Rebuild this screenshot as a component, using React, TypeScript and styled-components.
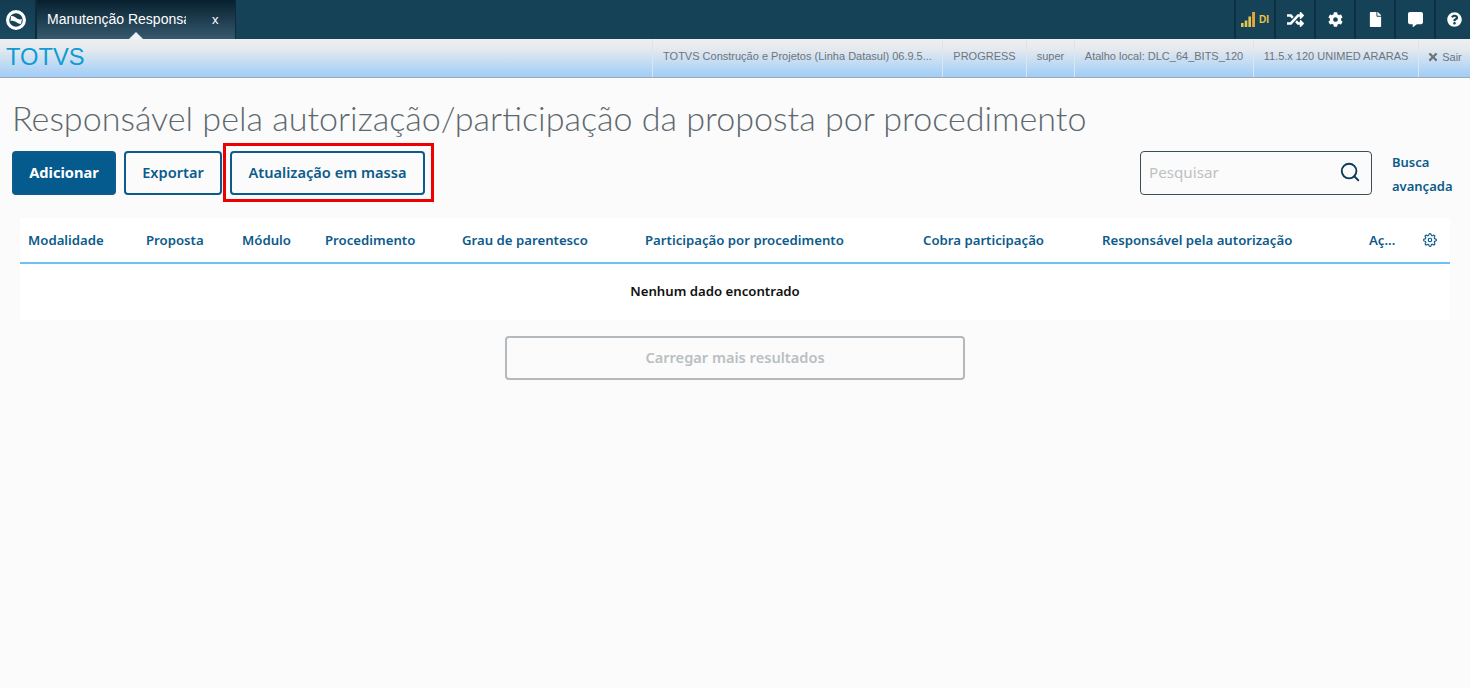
import * as React from "react";
import styled, { createGlobalStyle } from "styled-components";
import { FaCog, FaCommentAlt, FaFile, FaQuestionCircle, FaRandom, FaTimes } from "react-icons/fa";
import { FiSearch, FiSettings } from "react-icons/fi";

const GlobalStyle = createGlobalStyle`
  html, body {
    margin: 0;
    padding: 0;
    height: 100%;
    background: #fbfbfb;
    overflow: hidden;
  }
  * {
    box-sizing: border-box;
  }
`;

const Page = styled.div`
  width: 1470px;
  height: 688px;
  display: flex;
  flex-direction: column;
  font-family: "Noto Sans", sans-serif;
`;

const TopBar = styled.header`
  height: 39px;
  display: flex;
  background: #164258;
`;

const Logo = styled.div`
  width: 36px;
  display: flex;
  align-items: center;
  justify-content: center;
  padding-right: 4px;
  background: linear-gradient(#133b50, #1a4a61);
  border-right: 1px solid #0c2c3e;
`;

const Tab = styled.div`
  position: relative;
  width: 200px;
  display: flex;
  align-items: center;
  padding: 0 0 1px 10px;
  color: #fff;
  font: 14px "Liberation Sans", sans-serif;
  background: linear-gradient(#07202f, #36596e);
  border-right: 1px solid #0c2c3e;
  border-left: 1px solid #0c2c3e;

  &::after {
    content: "";
    position: absolute;
    left: 92px;
    bottom: 0;
    border-left: 7px solid transparent;
    border-right: 7px solid transparent;
    border-bottom: 7px solid #eef0f2;
  }
`;

const TabTitle = styled.span`
  width: 139px;
  overflow: hidden;
  white-space: nowrap;
`;

const TabClose = styled.span`
  margin-left: 26px;
  font-size: 13px;
`;

const TopActions = styled.div`
  margin-left: auto;
  display: flex;
`;

const TopAction = styled.div`
  width: 40px;
  display: flex;
  align-items: center;
  justify-content: center;
  color: #fff;
  font-size: 15px;
  border-left: 2px solid #0e3042;

  &:last-child {
    width: 36px;
    padding-left: 3px;
  }
`;

const SignalLabel = styled.span`
  margin-left: 3px;
  color: #e6c64a;
  font: bold 10px "Liberation Sans", sans-serif;
`;

const SubBar = styled.div`
  height: 39px;
  display: flex;
  align-items: stretch;
  background: linear-gradient(#eeeff0, #e6eaee 25%, #9fcdf9);
  border-bottom: 1px solid #a3a9ae;
`;

const Brand = styled.div`
  padding: 5px 0 0 6px;
  color: #119bd2;
  font: 23.7px "Liberation Sans", sans-serif;
`;

const InfoList = styled.div`
  margin-left: auto;
  display: flex;
`;

const InfoItem = styled.div<{ $width: number }>`
  width: ${({ $width }) => $width}px;
  display: flex;
  align-items: center;
  justify-content: center;
  padding-bottom: 4px;
  color: #6f7479;
  font: 11px "Liberation Sans", sans-serif;
  white-space: nowrap;
  border-left: 1px solid #dbe5ee;
`;

const SignOut = styled(InfoItem)`
  padding-bottom: 2px;
  gap: 3px;
`;

const Content = styled.main`
  flex: 1;
  padding: 0 20px 0 12px;
`;

const Title = styled.h1`
  margin: 20px 0 0;
  height: 40px;
  color: #5d686e;
  font: 300 34.1px/40px Lato, sans-serif;
  white-space: nowrap;
`;

const Toolbar = styled.div`
  margin-top: 13px;
  display: flex;
  align-items: flex-start;
  gap: 8px;
`;

const Button = styled.button<{ $primary?: boolean; $width: number }>`
  width: ${({ $width }) => $width}px;
  height: 44px;
  padding: 0 0 3px;
  border: 2px solid #0c5b8c;
  border-radius: 4px;
  background: ${({ $primary }) => ($primary ? "#055a8e" : "#fbfbfb")};
  color: ${({ $primary }) => ($primary ? "#fff" : "#0c5b8c")};
  font: ${({ $primary }) => ($primary ? 700 : 600)} 14.6px "Noto Sans", sans-serif;
`;

const Highlighted = styled.div`
  position: relative;
  display: flex;

  &::after {
    content: "";
    position: absolute;
    inset: -8px -9px -7px -7px;
    border: 3px solid #ee0000;
    pointer-events: none;
  }
`;

const SearchArea = styled.div`
  margin-left: auto;
  display: flex;
  gap: 20px;
  margin-right: -6px;
`;

const SearchBox = styled.div`
  width: 232px;
  height: 44px;
  display: flex;
  align-items: center;
  justify-content: space-between;
  padding: 0 10px 2px 8px;
  border: 1px solid #3d4d57;
  border-radius: 4px;
  background: #fbfbfb;
  color: #bcc1c4;
  font: 15.2px "Noto Sans", sans-serif;
`;

const SearchIcon = styled(FiSearch)`
  color: #0b3b57;
`;

const AdvancedLink = styled.a`
  width: 64px;
  color: #0c5b8c;
  font: 600 13px/24px "Noto Sans", sans-serif;
  margin-top: -1px;
`;

const TablePanel = styled.section`
  margin: 20px 0 0 8px;
  background: #fff;
`;

const HeaderRow = styled.div`
  height: 46px;
  display: grid;
  grid-template-columns: 118px 96px 83px 137px 183px 278px 179px 267px 54px 1fr;
  align-items: center;
  padding-left: 8px;
  border-bottom: 2px solid #6cc0f3;
  color: #0c5b8c;
  font: 600 13.2px "Noto Sans", sans-serif;
  white-space: nowrap;
`;

const GearCell = styled.span`
  display: flex;
  font-size: 14px;
`;

const EmptyRow = styled.div`
  height: 56px;
  display: flex;
  align-items: center;
  justify-content: center;
  padding: 0 40px 2px 0;
  color: #111;
  font: 600 13.2px "Noto Sans", sans-serif;
`;

const LoadMoreRow = styled.div`
  margin-top: 16px;
  display: flex;
  justify-content: center;
  padding-left: 8px;
`;

const LoadMore = styled.button`
  width: 460px;
  height: 44px;
  padding: 0 0 2px;
  border: 2px solid #b3b9bc;
  border-radius: 4px;
  background: #fbfbfb;
  color: #babfc2;
  font: 600 14.6px "Noto Sans", sans-serif;
`;

const TotvsLogo = () => (
  <svg width="22" height="22" viewBox="0 0 22 22">
    <circle cx="11" cy="11" r="8.4" fill="none" stroke="#fff" strokeWidth="3.2" />
    <path d="M6 7 C9 6.5 11 9 13 10 C14.5 10.7 16 10.5 17 10 L16 15 C14 15 12 13.5 10 12.5 C8.5 11.8 7 11.5 5.5 12 Z" fill="#fff" />
  </svg>
);

const SignalIcon = () => (
  <svg width="15" height="15" viewBox="0 0 15 15">
    <rect x="0" y="11" width="2.6" height="4" fill="#e6c64a" />
    <rect x="3.7" y="8.5" width="2.6" height="6.5" fill="#e6c64a" />
    <rect x="7.4" y="4.5" width="2.6" height="10.5" fill="#e6c64a" />
    <rect x="11.1" y="0" width="2.9" height="15" fill="#e8a23c" />
  </svg>
);

const columns = [
  "Modalidade",
  "Proposta",
  "Módulo",
  "Procedimento",
  "Grau de parentesco",
  "Participação por procedimento",
  "Cobra participação",
  "Responsável pela autorização",
  "Aç...",
];

const App: React.FC = () => (
  <Page>
    <GlobalStyle />
    <TopBar>
      <Logo>
        <TotvsLogo />
      </Logo>
      <Tab>
        <TabTitle>Manutenção Responsável</TabTitle>
        <TabClose>x</TabClose>
      </Tab>
      <TopActions>
        <TopAction>
          <SignalIcon />
          <SignalLabel>DI</SignalLabel>
        </TopAction>
        <TopAction>
          <FaRandom size={17} />
        </TopAction>
        <TopAction>
          <FaCog />
        </TopAction>
        <TopAction>
          <FaFile />
        </TopAction>
        <TopAction>
          <FaCommentAlt />
        </TopAction>
        <TopAction>
          <FaQuestionCircle />
        </TopAction>
      </TopActions>
    </TopBar>
    <SubBar>
      <Brand>TOTVS</Brand>
      <InfoList>
        <InfoItem $width={290}>TOTVS Construção e Projetos (Linha Datasul) 06.9.5...</InfoItem>
        <InfoItem $width={84}>PROGRESS</InfoItem>
        <InfoItem $width={48}>super</InfoItem>
        <InfoItem $width={179}>Atalho local: DLC_64_BITS_120</InfoItem>
        <InfoItem $width={165}>11.5.x 120 UNIMED ARARAS</InfoItem>
        <SignOut $width={52}>
          <FaTimes size={12} />
          Sair
        </SignOut>
      </InfoList>
    </SubBar>
    <Content>
      <Title>Responsável pela autorização/participação da proposta por procedimento</Title>
      <Toolbar>
        <Button $primary $width={104}>Adicionar</Button>
        <Button $width={98}>Exportar</Button>
        <Highlighted>
          <Button $width={195}>Atualização em massa</Button>
        </Highlighted>
        <SearchArea>
          <SearchBox>
            Pesquisar
            <SearchIcon size={22} />
          </SearchBox>
          <AdvancedLink>Busca avançada</AdvancedLink>
        </SearchArea>
      </Toolbar>
      <TablePanel>
        <HeaderRow>
          {columns.map((column) => (
            <span key={column}>{column}</span>
          ))}
          <GearCell>
            <FiSettings />
          </GearCell>
        </HeaderRow>
        <EmptyRow>Nenhum dado encontrado</EmptyRow>
      </TablePanel>
      <LoadMoreRow>
        <LoadMore>Carregar mais resultados</LoadMore>
      </LoadMoreRow>
    </Content>
  </Page>
);

export default App;
